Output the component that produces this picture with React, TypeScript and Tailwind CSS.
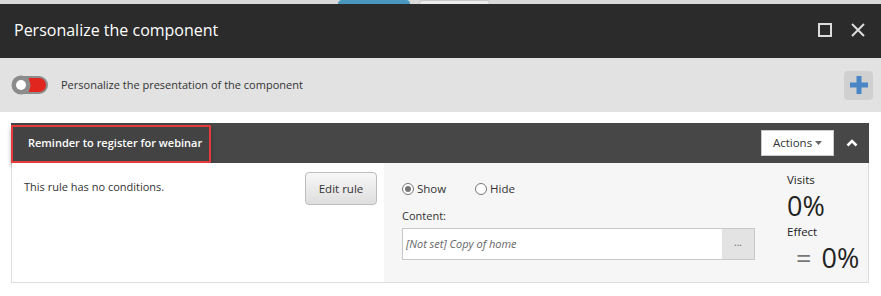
import React from 'react'

const Toggle: React.FC = () => (
    <svg width="38" height="20" viewBox="0 0 38 20">
        <rect x="1" y="1" width="36" height="18" rx="9" fill="#8c8c8c" />
        <path d="M18 3 H28 A7 7 0 0 1 28 17 H18 Z" fill="#e0261f" />
        <circle cx="10" cy="10" r="9.5" fill="#8c8c8c" />
        <circle cx="10" cy="10" r="5" fill="#ffffff" />
    </svg>
)

const App: React.FC = () => {
    return (
        <div className="w-[881px] h-[296px] bg-white overflow-hidden" style={{ fontFamily: '"Open Sans", sans-serif' }}>
            {/* page behind the dialog */}
            <div className="h-[4px] bg-[#d9d9d9] flex">
                <div className="ml-[338px] w-[72px] h-[4px] bg-[#4a98c0] rounded-t-[6px]"></div>
                <div className="ml-[9px] w-[71px] h-[4px] bg-[#ececec] border border-[#c8c8c8] border-b-0 rounded-t-[6px]"></div>
            </div>

            {/* dialog header */}
            <div className="h-[54px] bg-[#2b2b2b] flex items-center justify-between pl-[14px] pr-[16px]">
                <h1 className="text-[16px] text-white leading-none pb-[3px]">Personalize the component</h1>
                <div className="flex items-center gap-[19px] pb-[2px]">
                    <div className="w-[14px] h-[14px] border-2 border-[#dcdcdc]"></div>
                    <svg width="14" height="14" viewBox="0 0 14 14">
                        <path d="M1 1 L13 13 M13 1 L1 13" stroke="#dcdcdc" strokeWidth="2" />
                    </svg>
                </div>
            </div>

            {/* toolbar */}
            <div className="h-[54px] bg-[#e2e2e2] flex items-center justify-between pl-[11px] pr-[8px]">
                <div className="flex items-center gap-[12px]">
                    <Toggle />
                    <span className="text-[11px] text-[#333]">Personalize the presentation of the component</span>
                </div>
                <div className="w-[29px] h-[29px] rounded-[4px] bg-[#d0d0d0] flex items-center justify-center">
                    <svg width="20" height="20" viewBox="0 0 20 20">
                        <path d="M7.5 1 H12.5 V7.5 H19 V12.5 H12.5 V19 H7.5 V12.5 H1 V7.5 H7.5 Z" fill="#4a86c6" />
                    </svg>
                </div>
            </div>

            {/* rule */}
            <div className="pt-[11px] pl-[11px] pr-[12px]">
                <div className="h-[40px] bg-[#474747] flex items-center">
                    <div className="w-[200px] h-[38px] mt-[1px] border-2 border-[#e53b3b] bg-[#434343] shadow-[0_3px_4px_rgba(0,0,0,0.35)] flex items-center pl-[15px]">
                        <span className="text-[11px] font-semibold text-white whitespace-nowrap">Reminder to register for webinar</span>
                    </div>
                    <div className="flex-1"></div>
                    <button className="w-[73px] h-[26px] bg-white border border-[#ccc] text-[11.5px] text-[#333] flex items-center justify-center gap-[3px]">
                        Actions
                        <svg width="7" height="4" viewBox="0 0 7 4">
                            <path d="M0 0 H7 L3.5 4 Z" fill="#666" />
                        </svg>
                    </button>
                    <div className="w-[35px] flex justify-center">
                        <svg width="12" height="8" viewBox="0 0 12 8">
                            <path d="M1.5 6.5 L6 2 L10.5 6.5" stroke="#ffffff" strokeWidth="2.5" fill="none" />
                        </svg>
                    </div>
                </div>
                <div className="h-[120px] border border-t-0 border-[#dddddd] flex">
                    <div className="w-[372px] bg-white flex justify-between pl-[12px] pr-[7px] pt-[9px]">
                        <span className="text-[11px] text-[#333] mt-[7px]">This rule has no conditions.</span>
                        <button className="w-[72px] h-[33px] rounded-[4px] border border-[#bdbdbd] bg-gradient-to-b from-[#f7f7f7] to-[#dedede] text-[11.5px] text-[#333]">
                            Edit rule
                        </button>
                    </div>
                    <div className="flex-1 bg-[#f6f6f6] flex">
                        <div className="w-[371px] pl-[18px] pt-[17px]">
                            <div className="flex items-center text-[11.5px] text-[#333]">
                                <label className="flex items-center gap-[3px] w-[73px]">
                                    <span className="w-[12px] h-[12px] rounded-full border border-[#777] bg-white flex items-center justify-center">
                                        <span className="w-[6px] h-[6px] rounded-full bg-[#777]"></span>
                                    </span>
                                    Show
                                </label>
                                <label className="flex items-center gap-[3px]">
                                    <span className="w-[12px] h-[12px] rounded-full border border-[#777] bg-white"></span>
                                    Hide
                                </label>
                            </div>
                            <div className="text-[11px] text-[#333] mt-[11px]">Content:</div>
                            <div className="mt-[3px] w-[353px] h-[32px] border border-[#c8c8c8] bg-white flex">
                                <div className="flex-1 flex items-center pl-[3px] text-[11px] italic text-[#666]">[Not set] Copy of home</div>
                                <div className="w-[32px] bg-[#e3e3e3] flex items-center justify-center text-[10px] text-[#666] pb-[2px]">...</div>
                            </div>
                        </div>
                        <div className="flex-1 pl-[32px] pt-[9px] text-[#222]">
                            <div className="text-[11.5px] leading-[16px]">Visits</div>
                            <div className="text-[27px] leading-[36px]">0%</div>
                            <div className="text-[11.5px] leading-[16px]">Effect</div>
                            <div className="flex items-center text-[27px] leading-[36px]">
                                <span className="text-[#777] ml-[9px] mr-[10px]">=</span>
                                <span>0%</span>
                            </div>
                        </div>
                    </div>
                </div>
            </div>
        </div>
    )
}

export default App
